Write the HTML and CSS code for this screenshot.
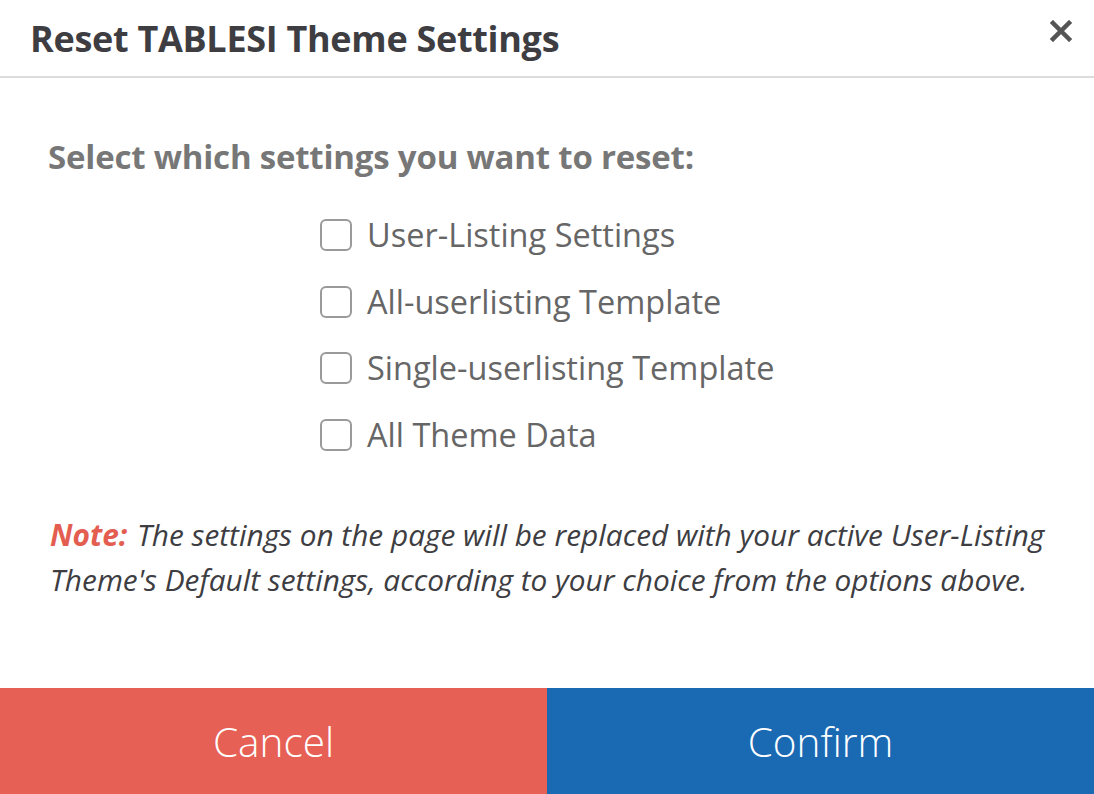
FILE: index.html
```html
<!DOCTYPE html>
<html>
<head>
<meta charset="utf-8">
<link rel="stylesheet" href="styles.css">
</head>
<body>
<div class="modal">
  <div class="header">
    <h1 class="title">Reset TABLESI Theme Settings</h1>
    <button class="close" aria-label="Close">
      <svg width="22" height="22" viewBox="0 0 22 22"><path d="M3 3 L19 19 M19 3 L3 19" stroke="#555" stroke-width="4.5" stroke-linecap="square"/></svg>
    </button>
  </div>
  <div class="body">
    <p class="lead">Select which settings you want to reset:</p>
    <div class="options">
      <label class="option"><span class="box"></span><span class="label">User-Listing Settings</span></label>
      <label class="option"><span class="box"></span><span class="label">All-userlisting Template</span></label>
      <label class="option"><span class="box"></span><span class="label">Single-userlisting Template</span></label>
      <label class="option"><span class="box"></span><span class="label">All Theme Data</span></label>
    </div>
    <p class="note"><strong class="note-tag">Note:</strong> The settings on the page will be replaced with your active User-Listing Theme's Default settings, according to your choice from the options above.</p>
  </div>
  <div class="footer">
    <button class="btn cancel">Cancel</button>
    <button class="btn confirm">Confirm</button>
  </div>
</div>
</body>
</html>
```

FILE: styles.css
```css
html, body {
  margin: 0;
  padding: 0;
  background: #fff;
}
body {
  font-family: "Open Sans", "Noto Sans", sans-serif;
}
.modal {
  width: 1094px;
  height: 794px;
  display: flex;
  flex-direction: column;
  background: #fff;
}
.header {
  height: 78px;
  border-bottom: 2px solid #dcdcdc;
  display: flex;
  align-items: center;
  justify-content: space-between;
  padding: 0 22px 0 30px;
  box-sizing: border-box;
  flex: none;
}
.title {
  margin: 0;
  font-size: 36px;
  line-height: 49px;
  font-weight: 700;
  color: #3d3d42;
  letter-spacing: -0.3px;
}
.close {
  background: none;
  border: 0;
  padding: 0;
  margin-top: -14px;
  width: 22px;
  height: 22px;
  cursor: pointer;
}
.body {
  flex: 1;
  padding: 0 26px 0 48px;
}
.lead {
  margin: 59px 0 0;
  font-size: 33px;
  font-weight: 700;
  color: #777;
  letter-spacing: -0.2px;
  line-height: 40px;
}
.options {
  display: flex;
  flex-direction: column;
  margin: 38px 0 0 272px;
  gap: 26.5px;
}
.option {
  display: flex;
  align-items: center;
  gap: 15px;
  height: 40px;
}
.box {
  width: 28px;
  height: 28px;
  border: 2px solid #9a9a9a;
  border-radius: 6px;
  flex: none;
}
.label {
  font-size: 32.5px;
  color: #666;
  line-height: 40px;
}
.note {
  margin: 57px 0 0;
  font-size: 29.8px;
  font-style: italic;
  color: #3d3d42;
  line-height: 45px;
  padding-left: 2px;
}
.note-tag {
  color: #e35d50;
  font-weight: 700;
  margin-right: 2px;
}
.footer {
  display: flex;
  height: 106px;
  flex: none;
}
.btn {
  flex: 1;
  border: 0;
  margin: 0;
  font-family: "Open Sans", "Noto Sans", sans-serif;
  font-size: 40.5px;
  font-weight: 300;
  color: #fff;
  cursor: pointer;
}
.cancel { background: #e66055; }
.confirm { background: #1a69b3; }
```
